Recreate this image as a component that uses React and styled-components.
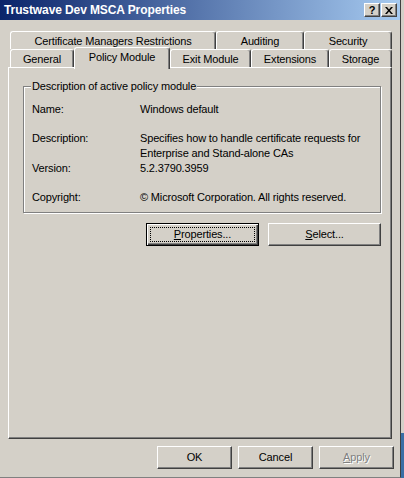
import React from 'react';
import styled, { createGlobalStyle } from 'styled-components';

const GlobalStyle = createGlobalStyle`
  html, body {
    margin: 0;
    padding: 0;
  }
  body {
    width: 404px;
    height: 478px;
    overflow: hidden;
    background: #d4d0c8;
    font-family: "Liberation Sans", Arial, sans-serif;
    font-size: 11px;
    letter-spacing: -0.15px;
    color: #000;
  }
`;

const Screen = styled.div`
  display: flex;
  width: 404px;
  height: 478px;
`;

const Window = styled.div`
  box-sizing: border-box;
  width: 401px;
  height: 478px;
  display: flex;
  flex-direction: column;
  background: #d4d0c8;
  border-right: 1px solid #404040;
  border-bottom: 1px solid #808080;
`;

const Desktop = styled.div`
  flex: 1;
  background: linear-gradient(to bottom, #d4d0c8 0 433px, #3a6ea5 433px);
`;

const TitleBar = styled.div`
  height: 20px;
  display: flex;
  align-items: center;
  padding: 0 3px 0 4px;
  background: linear-gradient(to right, #0a246a, #a6caf0);
`;

const Title = styled.span`
  color: #fff;
  font-weight: bold;
  font-size: 12px;
  letter-spacing: -0.1px;
`;

const CaptionButtons = styled.div`
  margin-left: auto;
  display: flex;
  gap: 1px;
`;

const CaptionButton = styled.div`
  box-sizing: border-box;
  width: 16px;
  height: 14px;
  display: flex;
  align-items: center;
  justify-content: center;
  background: #d4d0c8;
  border: 1px solid;
  border-color: #fff #404040 #404040 #fff;
  box-shadow: inset -1px -1px #808080;
  font-weight: bold;
  font-size: 11px;
  line-height: 1;
`;

const Body = styled.div`
  padding: 11px 8px 0 8px;
`;

const TabRow = styled.div`
  display: flex;
  height: 18px;
  margin-left: 2px;
`;

const Tab = styled.div`
  box-sizing: border-box;
  width: ${p => p.$w}px;
  height: ${p => (p.$active ? 22 : 18)}px;
  margin-top: ${p => (p.$active ? -2 : 0)}px;
  position: relative;
  z-index: ${p => (p.$active ? 1 : 0)};
  display: flex;
  justify-content: center;
  align-items: flex-start;
  padding-top: 2px;
  line-height: 15px;
  white-space: nowrap;
  background: #d4d0c8;
  border-top: 1px solid #fff;
  border-left: 1px solid #fff;
  border-right: 1px solid #404040;
  box-shadow: inset -1px 0 #808080;
  border-radius: 3px 3px 0 0;
`;

const Panel = styled.div`
  box-sizing: border-box;
  height: 372px;
  padding: 18px 0 0 14px;
  border: 1px solid;
  border-color: #fff #404040 #404040 #fff;
  box-shadow: inset -1px -1px #808080;
`;

const GroupBox = styled.div`
  position: relative;
  box-sizing: border-box;
  width: 358px;
  height: 127px;
  padding: 15px 0 0 8px;
  border: 1px solid #808080;
  box-shadow: inset 1px 1px #fff, 1px 1px #fff;
`;

const GroupCaption = styled.span`
  position: absolute;
  top: -8px;
  left: 7px;
  padding: 0 1px;
  line-height: 15px;
  background: #d4d0c8;
`;

const Field = styled.div`
  display: grid;
  grid-template-columns: 108px 1fr;
  line-height: 15px;
  margin-top: ${p => p.$gap || 0}px;
`;

const Value = styled.div`
  width: 230px;
`;

const ButtonRow = styled.div`
  display: flex;
  justify-content: flex-end;
  gap: 9px;
  width: 358px;
  margin-top: 10px;
`;

const Button = styled.div`
  box-sizing: border-box;
  width: ${p => p.$w || 75}px;
  height: 23px;
  padding: 3px;
  display: flex;
  background: #d4d0c8;
  border: 1px solid;
  border-color: ${p => (p.$default ? '#000' : '#fff #404040 #404040 #fff')};
  box-shadow: ${p =>
    p.$default
      ? 'inset 1px 1px #fff, inset -1px -1px #404040, inset -2px -2px #808080'
      : 'inset -1px -1px #808080'};
  color: ${p => (p.$disabled ? '#808080' : '#000')};
  text-shadow: ${p => (p.$disabled ? '1px 1px #fff' : 'none')};
`;

const ButtonLabel = styled.span`
  flex: 1;
  display: flex;
  align-items: center;
  justify-content: center;
  border: 1px dotted ${p => (p.$focus ? '#000' : 'transparent')};
  line-height: 13px;
`;

const Footer = styled.div`
  display: flex;
  justify-content: flex-end;
  gap: 6px;
  padding: 7px 6px 0 0;
`;

const topTabs = [
  { label: 'Certificate Managers Restrictions', w: 206 },
  { label: 'Auditing', w: 88 },
  { label: 'Security', w: 88 },
];

const bottomTabs = [
  { label: 'General', w: 64 },
  { label: 'Policy Module', w: 96, active: true },
  { label: 'Exit Module', w: 81 },
  { label: 'Extensions', w: 78 },
  { label: 'Storage', w: 63 },
];

const CloseGlyph = () => (
  <svg width="8" height="7" viewBox="0 0 8 7">
    <path d="M0 0h2l2 2.5L6 0h2L5 3.5 8 7H6L4 4.5 2 7H0l3-3.5z" fill="#000" />
  </svg>
);

export default function App() {
  return (
    <Screen>
      <GlobalStyle />
      <Window>
        <TitleBar>
          <Title>Trustwave Dev MSCA Properties</Title>
          <CaptionButtons>
            <CaptionButton>?</CaptionButton>
            <CaptionButton><CloseGlyph /></CaptionButton>
          </CaptionButtons>
        </TitleBar>
        <Body>
          <TabRow>
            {topTabs.map(t => (
              <Tab key={t.label} $w={t.w}>{t.label}</Tab>
            ))}
          </TabRow>
          <TabRow>
            {bottomTabs.map(t => (
              <Tab key={t.label} $w={t.w} $active={t.active}>{t.label}</Tab>
            ))}
          </TabRow>
          <Panel>
            <GroupBox>
              <GroupCaption>Description of active policy module</GroupCaption>
              <Field>
                <span>Name:</span>
                <Value>Windows default</Value>
              </Field>
              <Field $gap={14}>
                <span>Description:</span>
                <Value>Specifies how to handle certificate requests for Enterprise and Stand-alone CAs</Value>
              </Field>
              <Field>
                <span>Version:</span>
                <Value>5.2.3790.3959</Value>
              </Field>
              <Field $gap={14}>
                <span>Copyright:</span>
                <Value>© Microsoft Corporation. All rights reserved.</Value>
              </Field>
            </GroupBox>
            <ButtonRow>
              <Button $w={113} $default>
                <ButtonLabel $focus><u>P</u>roperties...</ButtonLabel>
              </Button>
              <Button $w={113}>
                <ButtonLabel><u>S</u>elect...</ButtonLabel>
              </Button>
            </ButtonRow>
          </Panel>
        </Body>
        <Footer>
          <Button><ButtonLabel>OK</ButtonLabel></Button>
          <Button><ButtonLabel>Cancel</ButtonLabel></Button>
          <Button $disabled><ButtonLabel><u>A</u>pply</ButtonLabel></Button>
        </Footer>
      </Window>
      <Desktop />
    </Screen>
  );
}
